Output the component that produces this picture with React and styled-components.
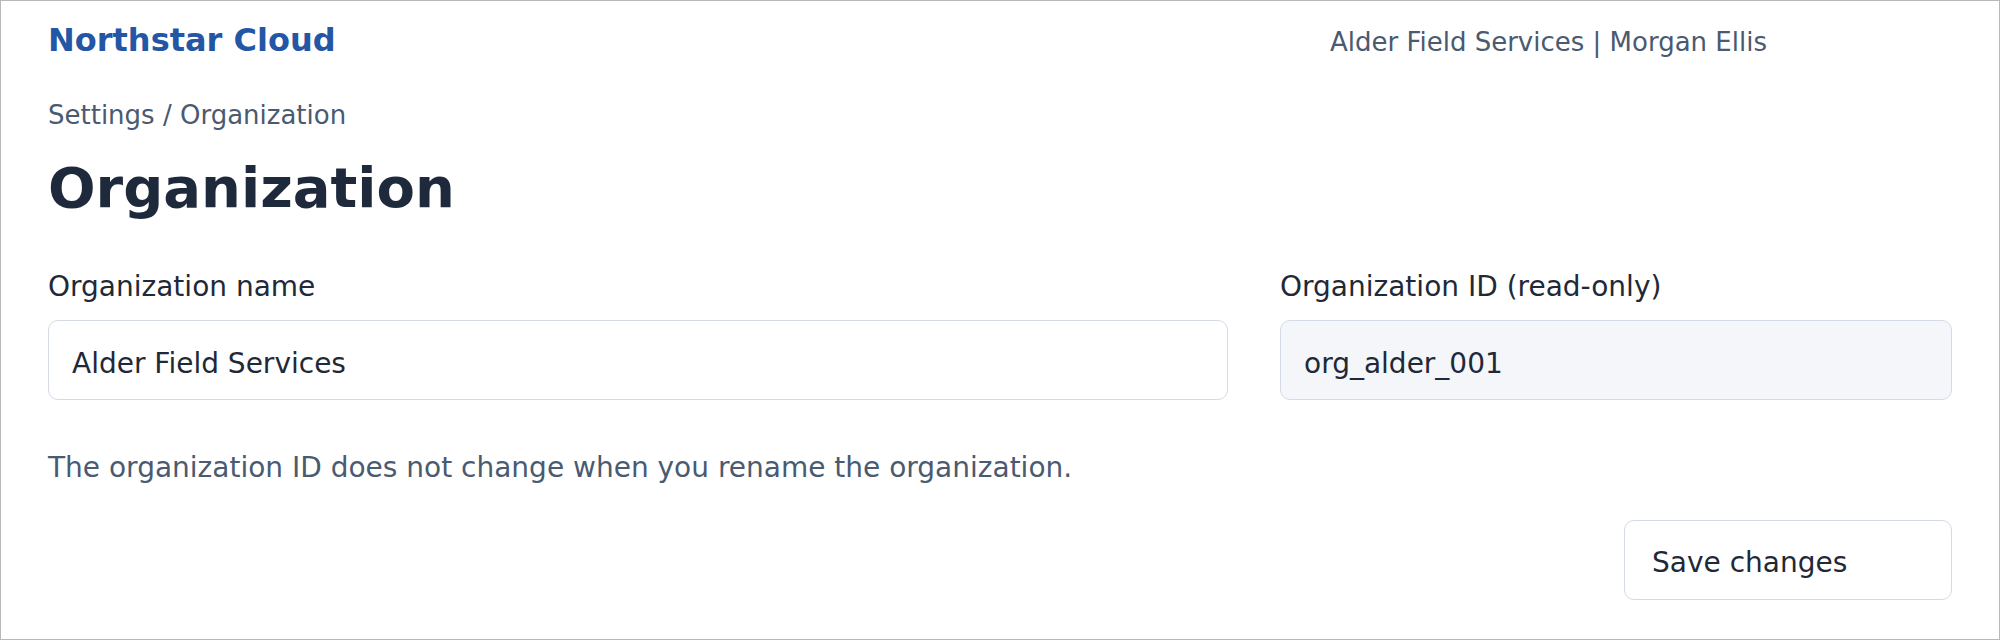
import React from "react";
import styled, { createGlobalStyle } from "styled-components";

const GlobalStyle = createGlobalStyle`
  * {
    box-sizing: border-box;
  }
  body {
    margin: 0;
    background: #ffffff;
    font-family: "DejaVu Sans", "Noto Sans", sans-serif;
  }
`;

const Frame = styled.div`
  width: 2000px;
  height: 640px;
  border: 1px solid #b8b8b8;
  padding: 21px 47px 0;
  background: #ffffff;
  display: flex;
  flex-direction: column;
`;

const Header = styled.header`
  display: flex;
  align-items: baseline;
  justify-content: space-between;
`;

const Brand = styled.div`
  font-size: 32px;
  line-height: 37px;
  font-weight: 700;
  color: #2456a6;
`;

const UserMeta = styled.div`
  font-size: 26px;
  line-height: 30px;
  color: #4a5a70;
  margin-right: 185px;
`;

const Breadcrumb = styled.nav`
  margin-top: 41px;
  font-size: 26px;
  line-height: 30px;
  color: #4a5a70;
`;

const Title = styled.h1`
  margin: 25px 0 0;
  font-size: 56px;
  line-height: 65px;
  font-weight: 700;
  color: #1e293b;
`;

const FormGrid = styled.div`
  margin-top: 50px;
  display: grid;
  grid-template-columns: minmax(0, 1180fr) minmax(0, 672fr);
  column-gap: 52px;
`;

const Field = styled.label`
  display: flex;
  flex-direction: column;
  gap: 17px;
`;

const FieldLabel = styled.span`
  font-size: 28px;
  line-height: 33px;
  color: #1f2937;
`;

const TextInput = styled.input`
  height: 80px;
  width: 100%;
  padding: 6px 23px 0;
  border: 1px solid #d3dae6;
  border-radius: 10px;
  background: ${(p) => (p.readOnly ? "#f4f6fa" : "#ffffff")};
  font-family: "DejaVu Sans", sans-serif;
  font-size: 28px;
  color: #1f2937;
  outline: none;
`;

const HelpText = styled.p`
  margin: 51px 0 0;
  font-size: 28px;
  line-height: 33px;
  color: #4a5a70;
`;

const Actions = styled.div`
  margin-top: 36px;
  display: flex;
  justify-content: flex-end;
`;

const Button = styled.button`
  width: 328px;
  height: 80px;
  padding: 4px 27px 0;
  text-align: left;
  background: #ffffff;
  border: 1px solid #d3dae6;
  border-radius: 10px;
  font-family: "DejaVu Sans", sans-serif;
  font-size: 28px;
  color: #1f2937;
  cursor: pointer;
`;

const App = () => {
  return (
    <>
      <GlobalStyle />
      <Frame>
        <Header>
          <Brand>Northstar Cloud</Brand>
          <UserMeta>Alder Field Services | Morgan Ellis</UserMeta>
        </Header>
        <Breadcrumb>Settings / Organization</Breadcrumb>
        <Title>Organization</Title>
        <FormGrid>
          <Field>
            <FieldLabel>Organization name</FieldLabel>
            <TextInput defaultValue="Alder Field Services" />
          </Field>
          <Field>
            <FieldLabel>Organization ID (read-only)</FieldLabel>
            <TextInput value="org_alder_001" readOnly />
          </Field>
        </FormGrid>
        <HelpText>
          The organization ID does not change when you rename the organization.
        </HelpText>
        <Actions>
          <Button type="button">Save changes</Button>
        </Actions>
      </Frame>
    </>
  );
};

export default App;
